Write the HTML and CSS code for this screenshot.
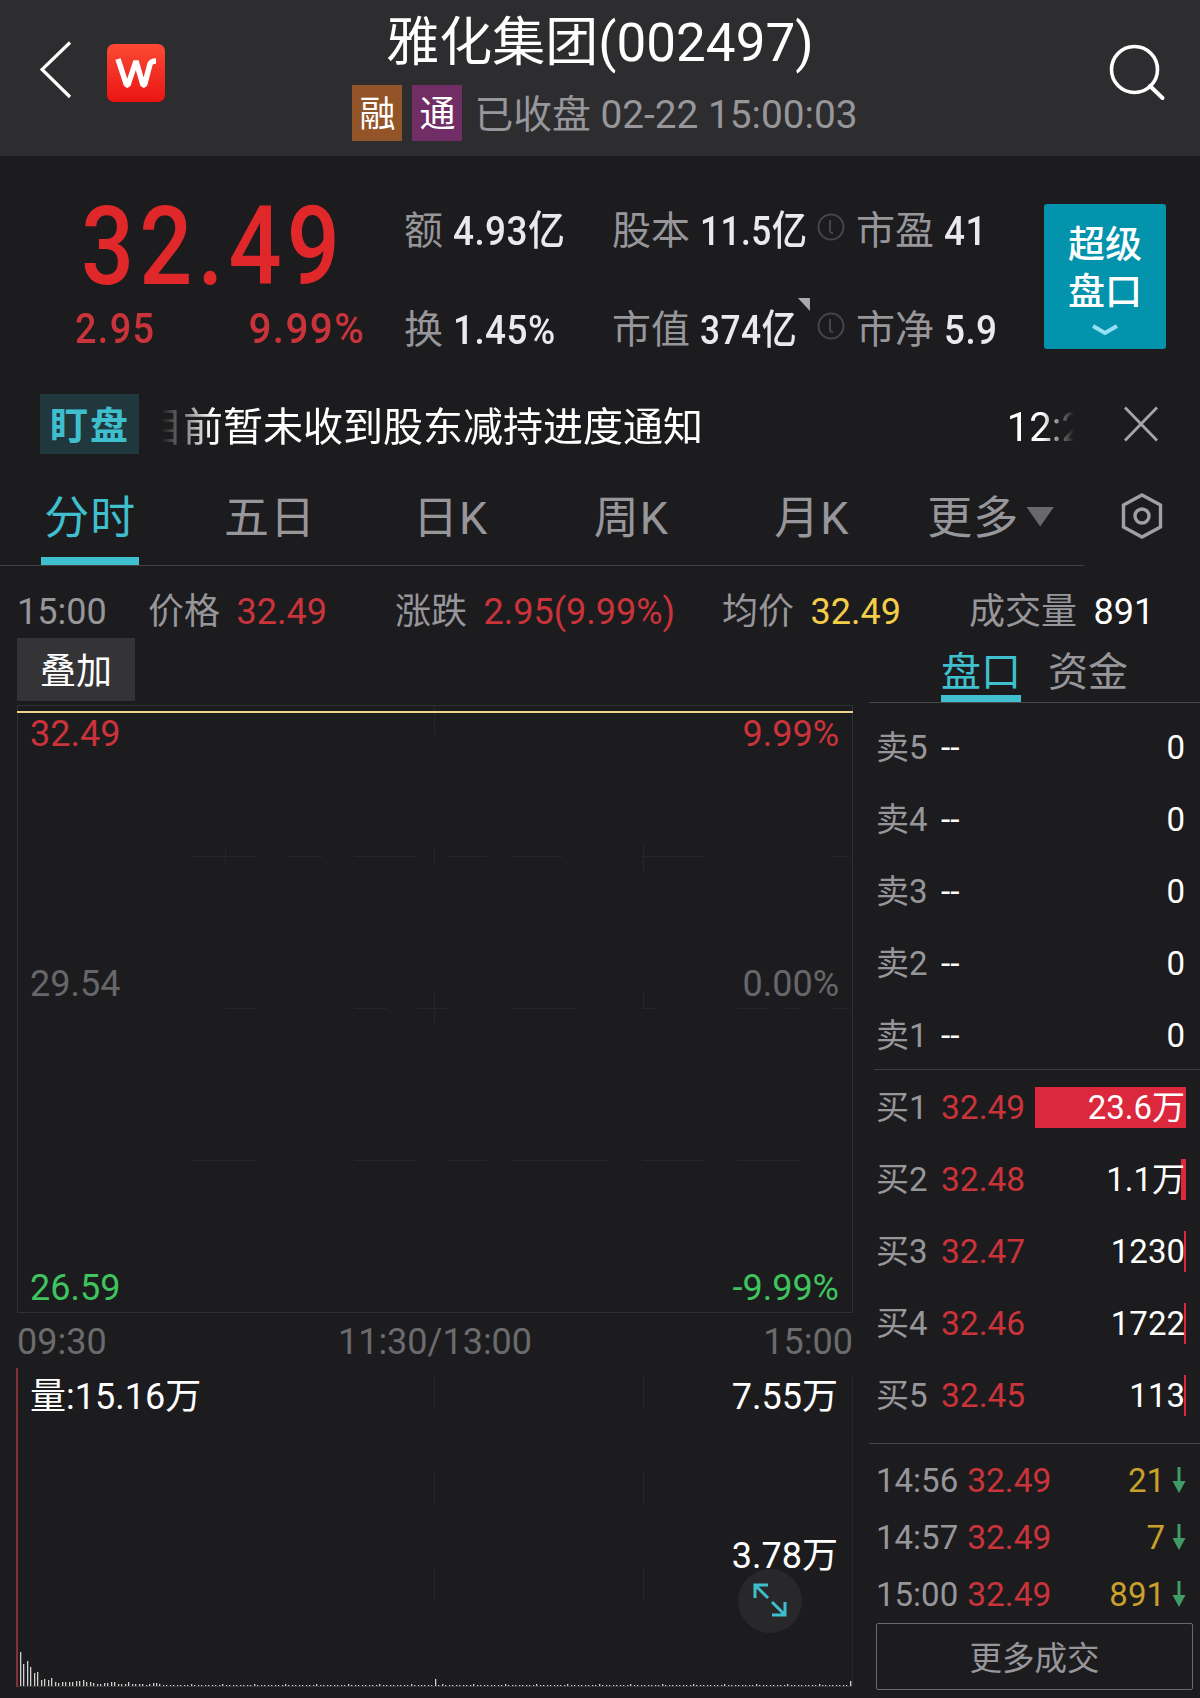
FILE: index.html
```html
<!DOCTYPE html>
<html lang="zh-CN">

<head>
  <meta charset="UTF-8">
  <meta name="viewport" content="width=device-width, initial-scale=1.0">
  <title>雅化集团(002497)</title>
  <link rel="stylesheet" href="styles.css">
</head>

<body>
  <header class="header">
    <svg class="back" width="32" height="58" viewBox="0 0 32 58">
      <path d="M30 1.500 L2 28.500 L30 56" fill="none" stroke="#fff" stroke-width="3.200" />
    </svg>
    <div class="logo">
      <svg width="42" height="30" viewBox="0 0 42 30">
        <path d="M3 1 L11.500 27 H13 L21 3 L28 27 H29.500 L35 6 C36 3.500 38 3 41 3" fill="none" stroke="#fff" stroke-width="5.500" stroke-linejoin="bevel" />
      </svg>
    </div>
    <div class="title-box">
      <h1>雅化集团(002497)</h1>
      <div class="status">
        <span class="badge rong">融</span>
        <span class="badge tong">通</span>
        <span class="time">已收盘 02-22 15:00:03</span>
      </div>
    </div>
    <svg class="search" width="58" height="58" viewBox="0 0 58 58">
      <circle cx="25.500" cy="25.500" r="23" fill="none" stroke="#fff" stroke-width="3.600" />
      <path d="M41 42 L53.500 54" stroke="#fff" stroke-width="4" stroke-linecap="round" />
    </svg>
  </header>

  <section class="quote">
    <div class="price-box">
      <div class="price">32.49</div>
      <div class="change"><span>2.95</span><span>9.99%</span></div>
    </div>
    <div class="stats">
      <div class="stat">额<b>4.93<small>亿</small></b></div>
      <div class="stat">股本<b class="narrow">11.5<small>亿</small></b></div>
      <div class="stat">
        <svg class="info" width="28" height="28" viewBox="0 0 28 28"><circle cx="14" cy="14" r="12.500" /><path d="M13 7 V18 Q13 20 16 20" /></svg>市盈<b>41</b>
      </div>
      <div class="stat">换<b>1.45%</b></div>
      <div class="stat">市值<b class="narrow">374<small>亿</small></b><i class="corner"></i></div>
      <div class="stat">
        <svg class="info" width="28" height="28" viewBox="0 0 28 28"><circle cx="14" cy="14" r="12.500" /><path d="M13 7 V18 Q13 20 16 20" /></svg>市净<b>5.9</b>
      </div>
    </div>
    <button class="super">
      <span>超级</span>
      <span>盘口</span>
      <svg width="28" height="14" viewBox="0 0 28 14"><path d="M2 3 L14 10 L26 3" fill="none" stroke="#96e0f5" stroke-width="4" /></svg>
    </button>
  </section>

  <section class="notice">
    <span class="tag">盯盘</span>
    <div class="ticker"><span>目前暂未收到股东减持进度通知</span><span class="ticker-time">12:2</span></div>
    <svg width="36" height="36" viewBox="0 0 36 36"><path d="M2 1.500 L34 34.500 M34 1.500 L2 34.500" stroke="#a5a5a7" stroke-width="2.800" /></svg>
  </section>

  <div class="tabs">
    <nav>
      <a class="tab active"><span>分时</span></a>
      <a class="tab"><span>五日</span></a>
      <a class="tab"><span>日K</span></a>
      <a class="tab"><span>周K</span></a>
      <a class="tab"><span>月K</span></a>
      <a class="tab"><span>更多</span><i class="arrow"></i></a>
    </nav>
    <svg width="42" height="48" viewBox="0 0 42 48" fill="none" stroke="#a0a0a2" stroke-width="3.400">
      <path d="M21 3 L39.500 13 V35 L21 45 L2.500 35 V13 Z" />
      <circle cx="21" cy="24" r="7" />
    </svg>
  </div>

  <div class="detail">
    <span class="d-time">15:00</span>
    <span class="d-price">价格<em class="red">32.49</em></span>
    <span class="d-change">涨跌<em class="red">2.95(9.99%)</em></span>
    <span class="d-avg">均价<em class="yellow">32.49</em></span>
    <span>成交量<em class="white">891</em></span>
  </div>

  <main class="content">
    <div class="left">
      <button class="overlay-btn">叠加</button>
      <div class="chart">
        <svg class="canvas" width="837" height="608" viewBox="0 0 837 608">
          <g stroke="#252628" stroke-width="1">
            <path d="M175 151.500 H240 M270 151.500 H305 M337 151.500 H400 M430 151.500 H470 M495 151.500 H545 M625 151.500 H688 M815 151.500 H833" />
            <path d="M208 303.500 H240 M337 303.500 H370 M400 303.500 H432 M495 303.500 H560 M625 303.500 H640 M720 303.500 H752 M768 303.500 H784 M815 303.500 H833" />
            <path d="M175 455.500 H240 M337 455.500 H400 M430 455.500 H470 M495 455.500 H592 M625 455.500 H688 M720 455.500 H784" />
            <path d="M208.500 142 V160 M417.500 0 V30 M417.500 142 V160 M417.500 286 V320 M626.500 138 V168 M626.500 286 V304" />
          </g>
          <path d="M0.500 0 V607.500 H835.500 V0.500 H0" fill="none" stroke="#303133" />
          <path d="M0 7 H836" stroke="#eed489" stroke-width="2" />
        </svg>
        <div class="scale red"><span>32.49</span><span>9.99%</span></div>
        <div class="scale middle"><span>29.54</span><span>0.00%</span></div>
        <div class="scale green"><span>26.59</span><span>-9.99%</span></div>
      </div>
      <div class="axis"><span>09:30</span><span>11:30/13:00</span><span>15:00</span></div>
      <div class="volume">
        <svg class="canvas" width="838" height="320" viewBox="0 0 838 320">
          <g stroke="#27282a">
            <path d="M418.500 8 V40 M418.500 104 V136 M418.500 200 V232" />
            <path d="M627.500 8 V40 M627.500 104 V136 M627.500 200 V232" />
            <path d="M836.500 8 V318" />
            <path d="M0 318.500 H836" stroke="#3a3a3c" />
          </g>
          <path d="M1 0 V319" stroke="#84303a" stroke-width="2" />
          <g id="volume-bars" fill="#d0d0d0"></g>
        </svg>
        <div class="scale white"><span>量:15.16万</span><span>7.55万</span></div>
        <div class="scale white"><span></span><span>3.78万</span></div>
        <div class="expand">
          <svg width="34" height="34" viewBox="0 0 34 34" fill="none" stroke="#3fbfce" stroke-width="3">
            <path d="M2 15 V2 H15 M2 2 L15 15" />
            <path d="M32 19 V32 H19 M32 32 L19 19" />
          </svg>
        </div>
      </div>
    </div>

    <div class="right">
      <div class="sub-tabs"><a class="active">盘口</a><a>资金</a></div>
      <div class="book sell">
        <div class="row"><span>卖5</span><b>--</b><em>0</em></div>
        <div class="row"><span>卖4</span><b>--</b><em>0</em></div>
        <div class="row"><span>卖3</span><b>--</b><em>0</em></div>
        <div class="row"><span>卖2</span><b>--</b><em>0</em></div>
        <div class="row"><span>卖1</span><b>--</b><em>0</em></div>
      </div>
      <div class="book buy">
        <div class="row"><span>买1</span><b>32.49</b><em><i class="bar" style="width: 151px"></i>23.6万</em></div>
        <div class="row"><span>买2</span><b>32.48</b><em><i class="bar" style="width: 5px"></i>1.1万</em></div>
        <div class="row"><span>买3</span><b>32.47</b><em><i class="bar" style="width: 2px"></i>1230</em></div>
        <div class="row"><span>买4</span><b>32.46</b><em><i class="bar" style="width: 2px"></i>1722</em></div>
        <div class="row"><span>买5</span><b>32.45</b><em><i class="bar" style="width: 2px"></i>113</em></div>
      </div>
      <div class="trades">
        <div class="trade"><span>14:56</span><b>32.49</b><em>21</em><svg width="14" height="26" viewBox="0 0 14 26"><path d="M7 0 V16" stroke="#419b66" stroke-width="3" /><path d="M0.500 14 H13.500 L7 26 Z" fill="#419b66" /></svg></div>
        <div class="trade"><span>14:57</span><b>32.49</b><em>7</em><svg width="14" height="26" viewBox="0 0 14 26"><path d="M7 0 V16" stroke="#419b66" stroke-width="3" /><path d="M0.500 14 H13.500 L7 26 Z" fill="#419b66" /></svg></div>
        <div class="trade"><span>15:00</span><b>32.49</b><em>891</em><svg width="14" height="26" viewBox="0 0 14 26"><path d="M7 0 V16" stroke="#419b66" stroke-width="3" /><path d="M0.500 14 H13.500 L7 26 Z" fill="#419b66" /></svg></div>
      </div>
      <button class="more">更多成交</button>
    </div>
  </main>

  <script>
    // one bar per minute, 240 minutes in a session
    const volumes = [34, 22, 25, 19, 13, 14, 6, 7, 6, 8, 4, 3, 4, 4, 4, 4, 5, 5, 6, 4, 4, 3, 2, 2, 3, 3, 4, 4, 2, 2, 2, 4, 2, 2, 2, 2, 1, 2, 3, 3];
    const step = 3.487;

    function showVolume() {
      let bars = "";
      for (let i = 0; i < 239; i++) {
        let h = volumes[i] || (i % 9 === 4 ? 2 : 1);
        if (i === 119) h = 7;
        if (i === 238) h = 5;
        const x = Math.round(4 + i * step);
        bars += `<rect x="${x}" y="${318 - h}" width="1.300" height="${h}" />`;
      }
      document.getElementById("volume-bars").innerHTML = bars;
    }

    showVolume();
  </script>
</body>

</html>
```
FILE: styles.css
```css
* {
  box-sizing: border-box;
}

body {
  width: 1200px;
  height: 1698px;
  margin: 0;
  overflow: hidden;
  background-color: #1c1c1e;
  color: #97969a;
  font-family: Roboto, "Noto Sans CJK SC", sans-serif;
}

svg {
  display: block;
  flex: none;
}

button {
  border: none;
  padding: 0;
  font-family: inherit;
}

em,
i {
  font-style: normal;
}

.red {
  color: #cb333a;
}

.green {
  color: #3fc45f;
}

.yellow {
  color: #f4cd4a;
}

.white {
  color: #fff;
}

.header {
  height: 156px;
  display: flex;
  align-items: flex-start;
  background-color: #2d2d2f;
}

.back {
  margin: 41px 0 0 40px;
}

.logo {
  width: 58px;
  height: 58px;
  margin: 44px 0 0 35px;
  border-radius: 7px;
  background: linear-gradient(#fb4a35, #ea1512);
  display: flex;
  align-items: center;
  justify-content: center;
}

.title-box {
  width: 700px;
  margin-left: 85px;
  display: flex;
  flex-direction: column;
  align-items: center;
}

h1 {
  margin: 0;
  color: #fff;
  font-size: 53px;
  font-weight: 400;
  line-height: 87px;
}

.status {
  margin: -2px 0 0 10px;
  display: flex;
  gap: 10px;
  line-height: 56px;
}

.badge {
  width: 50px;
  height: 56px;
  color: #fff;
  font-size: 36px;
  line-height: 60px;
  text-align: center;
}

.rong {
  background-color: #935427;
}

.tong {
  background-color: #712d65;
}

.time {
  margin-left: 2px;
  font-size: 38.8px;
  line-height: 60px;
}

.search {
  margin: 44px 0 0 159px;
}

.quote {
  height: 238px;
  display: flex;
  align-items: flex-start;
}

.price-box {
  width: 290px;
  margin: 39px 0 0 75px;
}

.price {
  width: 290px;
  height: 101px;
  margin-left: 6px;
  color: #e0282b;
  font-size: 110px;
  font-weight: 500;
  line-height: 103px;
  letter-spacing: 6px;
  transform: scaleX(0.85);
  transform-origin: left;
}

.change {
  display: flex;
  justify-content: space-between;
  color: #cb333a;
  font-size: 43px;
  font-weight: 500;
  line-height: 64px;
}

.change span {
  letter-spacing: 1.5px;
  transform: scaleX(0.88);
  transform-origin: left;
}

.change span:last-child {
  transform: scaleX(0.94);
  transform-origin: right;
}

.stats {
  width: 640px;
  margin: 25px 0 0 39px;
  display: grid;
  grid-template-columns: 208px 205px 1fr;
  grid-auto-rows: 99px;
  white-space: nowrap;
}

.stat {
  display: flex;
  align-items: center;
  font-size: 39px;
  line-height: 60px;
}

.stat b {
  margin-left: 10px;
  color: #ebe9ec;
  font-size: 41px;
  font-weight: 500;
  letter-spacing: 0.5px;
  transform: scaleX(0.9);
  transform-origin: left;
}

.stat .narrow {
  transform: scaleX(0.86);
}

.stat small {
  font-size: 41px;
}

.info {
  margin: -8px 11px 0 0;
  fill: none;
  stroke: #464648;
  stroke-width: 2;
}

.corner {
  width: 12px;
  height: 13px;
  margin: -50px 0 0 -15px;
  background-color: #aaaaac;
  clip-path: polygon(0 0, 100% 0, 100% 100%);
}

.super {
  width: 122px;
  height: 145px;
  margin-top: 48px;
  padding-top: 18px;
  border-radius: 3px;
  background-color: #0393ad;
  color: #fff;
  display: flex;
  flex-direction: column;
  align-items: center;
  font-size: 37px;
  font-weight: 500;
  line-height: 47px;
}

.super svg {
  margin-top: 7px;
}

.notice {
  height: 60px;
  display: flex;
  align-items: center;
  padding-left: 40px;
}

.tag {
  width: 99px;
  height: 60px;
  padding-left: 10px;
  background-color: #20383d;
  color: #3fbfce;
  font-size: 38px;
  font-weight: 700;
  line-height: 64px;
  letter-spacing: 2px;
}

.ticker {
  width: 912px;
  margin: 7px 49px 0 23px;
  display: flex;
  justify-content: space-between;
  overflow: hidden;
  white-space: nowrap;
  color: #fff;
  font-size: 40px;
  line-height: 60px;
  -webkit-mask-image: linear-gradient(90deg, transparent, #000 50px, #000 880px, transparent);
  mask-image: linear-gradient(90deg, transparent, #000 50px, #000 880px, transparent);
}

.ticker span:first-child {
  margin-left: -19px;
}

.ticker-time {
  margin-right: -10px;
}

.tabs {
  height: 112px;
  display: flex;
  align-items: flex-end;
}

.tabs nav {
  width: 1084px;
  height: 96px;
  margin-right: 37px;
  display: grid;
  grid-template-columns: repeat(6, 1fr);
  border-bottom: 1px solid #414143;
}

.tabs > svg {
  margin-bottom: 26px;
}

.tab {
  display: flex;
  align-items: center;
  justify-content: center;
  padding-right: 2px;
  font-size: 45px;
  line-height: 97px;
  letter-spacing: 1px;
}

.tab.active {
  align-items: flex-start;
  padding: 0;
  color: #40bfce;
}

.tab.active span {
  height: 95px;
  padding: 0 3px;
  border-bottom: 8px solid #40bfce;
}

.arrow {
  width: 28px;
  height: 20px;
  margin: -4px 4px 0 7px;
  background-color: #69696b;
  clip-path: polygon(0 0, 100% 0, 50% 100%);
}

.detail {
  height: 72px;
  display: flex;
  padding-left: 17px;
  font-size: 36px;
  line-height: 93px;
  white-space: nowrap;
}

.detail em {
  margin-left: 16.5px;
}

.d-time {
  width: 131px;
}

.d-price {
  width: 247px;
}

.d-change {
  width: 327px;
}

.d-avg {
  width: 247px;
}

.content {
  display: flex;
}

.left {
  width: 836px;
  margin-left: 17px;
}

.overlay-btn {
  display: block;
  width: 118px;
  height: 63px;
  margin-bottom: 4px;
  padding-bottom: 3px;
  background-color: #343436;
  color: #fff;
  font-size: 36px;
}

.chart {
  position: relative;
  height: 608px;
  padding: 8px 14px 4px 13px;
  display: flex;
  flex-direction: column;
  justify-content: space-between;
  color: #67676a;
}

/* drawings lie under the labels */
.canvas {
  position: absolute;
  top: 0;
  left: 0;
}

.scale {
  position: relative;
  display: flex;
  justify-content: space-between;
  font-size: 36px;
  line-height: 42px;
}

/* the base price sits on top of its grid line */
.middle {
  margin-bottom: 54px;
}

.axis {
  height: 55px;
  display: flex;
  justify-content: space-between;
  color: #6b6b6d;
  font-size: 36px;
  line-height: 59px;
}

.volume {
  position: relative;
  height: 322px;
  margin-left: -1px;
  padding: 8px 15px 0 14px;
}

.volume .scale + .scale {
  margin-top: 117px;
}

.expand {
  position: absolute;
  top: 201px;
  left: 722px;
  width: 64px;
  height: 64px;
  padding-bottom: 2px;
  border-radius: 50%;
  background-color: #28282b;
  display: flex;
  align-items: center;
  justify-content: center;
}

.right {
  width: 331px;
  margin-left: 16px;
}

.sub-tabs {
  height: 65px;
  padding-left: 72px;
  display: flex;
  gap: 27px;
  border-bottom: 1px solid #48484a;
  font-size: 40px;
  line-height: 69px;
}

.sub-tabs .active {
  height: 64px;
  border-bottom: 7px solid #40bfce;
  color: #40bfce;
}

.book {
  padding-left: 7px;
}

.sell {
  height: 366px;
  padding-top: 8px;
}

.buy {
  height: 374px;
  margin-left: 5px;
  padding: 1px 0 0 2px;
  border-top: 1px solid #3e3e40;
}

.row {
  height: 72px;
  display: flex;
  align-items: center;
  font-size: 33px;
  line-height: 41px;
}

.row span {
  width: 65px;
}

.row b {
  width: 94px;
  color: #cb333a;
  font-size: 33.5px;
  font-weight: 400;
}

.sell b {
  color: #fff;
}

.row em {
  position: relative;
  width: 151px;
  height: 41px;
  padding-right: 1px;
  color: #fff;
  text-align: right;
}

.bar {
  position: absolute;
  z-index: -1;
  top: 0;
  right: 0;
  height: 41px;
  background-color: #dc283c;
}

.trades {
  padding: 8px 0 0 7px;
  border-top: 1px solid #48484a;
}

.trade {
  height: 57px;
  display: flex;
  align-items: center;
  font-size: 33px;
}

.trade b {
  margin-left: 9px;
  color: #cb333a;
  font-size: 33.5px;
  font-weight: 400;
}

.trade em {
  margin-left: auto;
  color: #c9a02a;
}

.trade svg {
  margin: -2px 14px 0 7px;
}

.more {
  display: block;
  width: 317px;
  height: 67px;
  margin-left: 7px;
  padding-bottom: 3px;
  border: 1px solid #6a6a6c;
  border-radius: 2px;
  background: none;
  color: #97969a;
  font-size: 32.5px;
}
```
